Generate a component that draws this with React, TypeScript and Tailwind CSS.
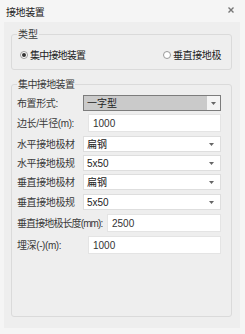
import { ReactNode } from 'react'

const font = { fontFamily: '"Liberation Sans", "Noto Sans CJK SC", sans-serif' }

function Arrow() {
  return (
    <svg width="5" height="3" viewBox="0 0 5 3" className="shrink-0">
      <path d="M0 0 L5 0 L2.5 3 Z" fill="#666" />
    </svg>
  )
}

function Row({ label, labelW, mt, tight, children }: { label: string; labelW: string; mt: string; tight?: boolean; children: ReactNode }) {
  return (
    <div className={`flex items-center ${mt}`}>
      <div
        className={`${labelW} shrink-0 whitespace-nowrap text-[10px] text-[#3a3a3a] ${tight ? 'tracking-[-0.9px]' : 'tracking-[-0.4px]'}`}
      >
        {label}
      </div>
      {children}
    </div>
  )
}

function Select({ value }: { value: string }) {
  return (
    <div className="flex h-[16px] flex-1 items-center justify-between border border-[#dedede] bg-white pl-[3px] pr-[6px]">
      <span className="text-[10px] text-[#222]">{value}</span>
      <Arrow />
    </div>
  )
}

function Input({ value }: { value: string }) {
  return (
    <div className="flex h-[18px] flex-1 items-center border border-[#e4e4e4] bg-white pl-[4px]">
      <span className="text-[10px] text-[#333]">{value}</span>
    </div>
  )
}

export default function App() {
  return (
    <div className="flex h-[334px] w-[245px] flex-col bg-[#f5f5f5]" style={font}>
      {/* title bar */}
      <div className="flex h-[22px] shrink-0 items-center justify-between pl-[6px] pr-[11px] pt-[3px]">
        <span className="text-[10px] tracking-[-0.4px] text-[#222]">接地装置</span>
        <svg width="6" height="6" viewBox="0 0 6 6" className="mb-[6px]">
          <path d="M0.5 0.5 L5.5 5.5 M5.5 0.5 L0.5 5.5" stroke="#777" strokeWidth="1.4" />
        </svg>
      </div>

      <div className="ml-[4px] mr-[5px] flex h-[306px] flex-col bg-[#eeeeee] pb-[11px] pl-[7px] pr-[8px] pt-[5px]">
        {/* 类型 */}
        <fieldset className="rounded-[3px] border border-[#dadada] px-[5px] pb-[7px] pt-[6px]">
          <legend className="px-[1px] text-[10px] text-[#3a3a3a]">类型</legend>
          <div className="flex h-[14px] items-center justify-between pl-[3px] pr-[5px]">
            <div className="flex items-center gap-[2px]">
              <span className="flex h-[8px] w-[8px] items-center justify-center rounded-full border border-[#999] bg-white">
                <span className="h-[4px] w-[4px] rounded-full bg-[#333]" />
              </span>
              <span className="text-[10px] tracking-[-0.8px] text-[#222]">集中接地装置</span>
            </div>
            <div className="flex items-center gap-[2px]">
              <span className="h-[8px] w-[8px] rounded-full border border-[#999] bg-white" />
              <span className="text-[10px] tracking-[-0.4px] text-[#222]">垂直接地极</span>
            </div>
          </div>
        </fieldset>

        {/* 集中接地装置 */}
        <fieldset className="mt-[7px] flex-1 rounded-[3px] border border-[#dadada] pl-[5px] pr-[10px] pt-[3px]">
          <legend className="px-[1px] text-[10px] tracking-[-0.6px] text-[#3a3a3a]">集中接地装置</legend>
          <div className="flex flex-col">
            <Row label="布置形式:" labelW="w-[66px]" mt="mt-0">
              <div className="flex h-[16px] flex-1 items-stretch border border-[#7c7c7c] bg-[#f4f4f4]">
                <div className="flex flex-1 items-center bg-[#cacaca] pl-[3px]">
                  <span className="text-[10px] text-[#222]">一字型</span>
                </div>
                <div className="flex w-[13px] items-center justify-center">
                  <Arrow />
                </div>
              </div>
            </Row>
            <Row label="边长/半径(m):" labelW="w-[71px]" mt="mt-[3px]">
              <Input value="1000" />
            </Row>
            <Row label="水平接地极材" labelW="w-[66px]" mt="mt-[4px]">
              <Select value="扁钢" />
            </Row>
            <Row label="水平接地极规" labelW="w-[66px]" mt="mt-[3px]">
              <Select value="5x50" />
            </Row>
            <Row label="垂直接地极材" labelW="w-[66px]" mt="mt-[3px]">
              <Select value="扁钢" />
            </Row>
            <Row label="垂直接地极规" labelW="w-[66px]" mt="mt-[4px]">
              <Select value="5x50" />
            </Row>
            <Row label="垂直接地极长度(mm):" labelW="w-[90px]" mt="mt-[4px]" tight>
              <Input value="2500" />
            </Row>
            <Row label="埋深(-)(m):" labelW="w-[71px]" mt="mt-[4px]">
              <Input value="1000" />
            </Row>
          </div>
        </fieldset>
      </div>
    </div>
  )
}
